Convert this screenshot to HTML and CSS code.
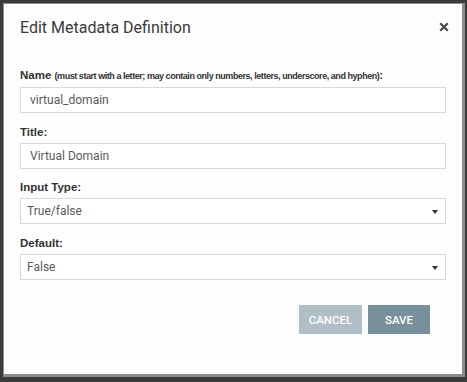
FILE: index.html
```html
<!DOCTYPE html>
<html>
<head>
    <meta charset="UTF-8">
    <title>Edit Metadata Definition</title>
    <link rel="stylesheet" href="styles.css">
</head>
<body>
    <div class="backdrop">
        <div class="modal">
            <div class="modal-header">
                <h2>Edit Metadata Definition</h2>
                <button class="close" title="Close">
                    <svg width="10" height="10" viewBox="0 0 10 10">
                        <path d="M2 2 L8 8 M8 2 L2 8" stroke="#4a4a4a" stroke-width="2.2" stroke-linecap="square"/>
                    </svg>
                </button>
            </div>

            <div class="modal-body">
                <div class="field">
                    <label>Name <span class="hint">(must start with a letter; may contain only numbers, letters, underscore, and hyphen)</span>:</label>
                    <div class="input">virtual_domain</div>
                </div>
                <div class="field">
                    <label>Title:</label>
                    <div class="input">Virtual Domain</div>
                </div>
                <div class="field">
                    <label>Input Type:</label>
                    <div class="input select">True/false<span class="caret"></span></div>
                </div>
                <div class="field">
                    <label>Default:</label>
                    <div class="input select">False<span class="caret"></span></div>
                </div>
            </div>

            <div class="modal-footer">
                <button class="btn cancel">Cancel</button>
                <button class="btn save">Save</button>
            </div>
        </div>
    </div>
</body>
</html>
```

FILE: styles.css
```css
html, body {
    margin: 0;
    padding: 0;
}
body {
    background: #3b3b3b;
    font-family: Roboto, "Liberation Sans", sans-serif;
    width: 467px;
    height: 382px;
    overflow: hidden;
}
.backdrop {
    padding: 4px 0 0 4px;
}
.modal {
    width: 458px;
    height: 370px;
    background: #fdfdfd;
    box-shadow: 1px 1px 0 2px #8c8c8c;
    box-sizing: border-box;
    display: flex;
    flex-direction: column;
}
.modal-header {
    display: flex;
    justify-content: space-between;
    align-items: flex-start;
    padding: 14px 13px 0 16px;
    height: 55px;
    box-sizing: border-box;
}
.modal-header h2 {
    margin: 0;
    font-weight: 400;
    font-size: 16px;
    line-height: 20px;
    color: #3a3a3a;
}
.close {
    border: none;
    background: none;
    padding: 0;
    margin-top: 2px;
    cursor: pointer;
}
.modal-body {
    padding: 9px 16px 0 16px;
}
.field {
    margin-bottom: 11.5px;
}
.field label {
    display: block;
    font-family: "Liberation Sans", Arial, sans-serif;
    font-weight: bold;
    font-size: 11.5px;
    line-height: 15px;
    margin-bottom: 3px;
    color: #333;
}
.hint {
    font-size: 9px;
    letter-spacing: -0.45px;
}
.input {
    position: relative;
    height: 26px;
    box-sizing: border-box;
    border: 1px solid #d9d9d9;
    background: #fff;
    padding: 0 9px;
    font-size: 12px;
    line-height: 24px;
    color: #5a5a5a;
}
.select {
    padding-left: 6px;
}
.caret {
    position: absolute;
    right: 7px;
    top: 11px;
    width: 0;
    height: 0;
    border-left: 3.5px solid transparent;
    border-right: 3.5px solid transparent;
    border-top: 4px solid #333;
}
.modal-footer {
    display: flex;
    justify-content: flex-end;
    gap: 6px;
    padding: 14px 32px 0 0;
}
.btn {
    height: 29px;
    border: none;
    color: #fff;
    font-family: Roboto, "Liberation Sans", sans-serif;
    font-weight: 500;
    font-size: 11.5px;
    text-transform: uppercase;
    padding: 0;
}
.cancel {
    width: 63px;
    background: #b0bec5;
}
.save {
    width: 62px;
    background: #78909c;
}
```
